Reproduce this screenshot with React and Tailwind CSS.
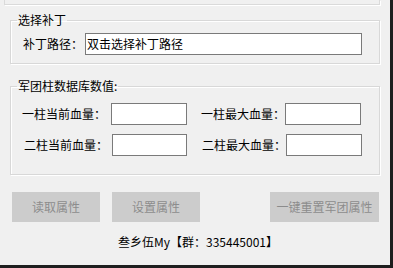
import React from 'react';

const FONT = { fontFamily: '"Microsoft YaHei", "Noto Sans CJK SC", sans-serif' };

const Btn = ({ children, w }) => (
  <div className={`${w} h-[30px] bg-[#cccccc] flex items-center justify-center text-[12px] text-[#8c8c8c]`}>
    {children}
  </div>
);

export default function App() {
  return (
    <div
      className="w-[393px] h-[268px] bg-[#f0f0f0] border-r-[3px] border-b-[3px] border-[#1e1e1e] overflow-hidden"
      style={FONT}
    >
      {/* remnant of the group above */}
      <div className="ml-[4px] w-[376px] h-[5px] border-x border-b border-[#dadada] shadow-[1px_1px_0_#fff]" />

      {/* 选择补丁 */}
      <fieldset className="mt-[8px] ml-[10px] w-[370px] h-[51px] border border-[#d8d8d8] shadow-[inset_1px_1px_0_#fff,1px_1px_0_#fff]">
        <legend className="ml-[6px] px-[1px] text-[12px] leading-[14px] text-black">选择补丁</legend>
        <div className="flex items-center pt-[6px] pl-[12px]">
          <span className="text-[12px] leading-[14px] text-black w-[62px] whitespace-nowrap">补丁路径：</span>
          <div className="h-[22px] w-[277px] border border-[#7a7a7a] bg-white flex items-center pl-[1px] text-[12px] text-black">
            双击选择补丁路径
          </div>
        </div>
      </fieldset>

      {/* 军团柱数据库数值 */}
      <fieldset className="mt-[15px] ml-[10px] w-[370px] h-[96px] border border-[#d8d8d8] shadow-[inset_1px_1px_0_#fff,1px_1px_0_#fff]">
        <legend className="ml-[6px] px-[1px] text-[12px] leading-[14px] text-black">军团柱数据库数值:</legend>
        <div className="grid grid-cols-2 gap-y-[9px] pt-[10px]">
          <div className="flex items-center pl-[11px]">
            <span className="text-[12px] leading-[14px] w-[89px] whitespace-nowrap">一柱当前血量：</span>
            <div className="h-[22px] w-[76px] border border-[#7a7a7a] bg-white" />
          </div>
          <div className="flex items-center pl-[6px]">
            <span className="text-[12px] leading-[14px] w-[84px] whitespace-nowrap">一柱最大血量：</span>
            <div className="h-[22px] w-[76px] border border-[#7a7a7a] bg-white" />
          </div>
          <div className="flex items-center pl-[13px]">
            <span className="text-[12px] leading-[14px] w-[88px] whitespace-nowrap">二柱当前血量：</span>
            <div className="h-[22px] w-[75px] border border-[#7a7a7a] bg-white" />
          </div>
          <div className="flex items-center pl-[7px]">
            <span className="text-[12px] leading-[14px] w-[84px] whitespace-nowrap">二柱最大血量：</span>
            <div className="h-[22px] w-[76px] border border-[#7a7a7a] bg-white" />
          </div>
        </div>
      </fieldset>

      {/* buttons */}
      <div className="flex mt-[17px] pl-[12px]">
        <Btn w="w-[88px]">读取属性</Btn>
        <div className="ml-[12px]"><Btn w="w-[88px]">设置属性</Btn></div>
        <div className="ml-[70px]"><Btn w="w-[109px]">一键重置军团属性</Btn></div>
      </div>

      {/* footer */}
      <div className="mt-[13px] flex justify-center pl-[6px] text-[12px] leading-[14px] font-normal text-black whitespace-nowrap">
        叁乡伍My【群：335445001】
      </div>
    </div>
  );
}
